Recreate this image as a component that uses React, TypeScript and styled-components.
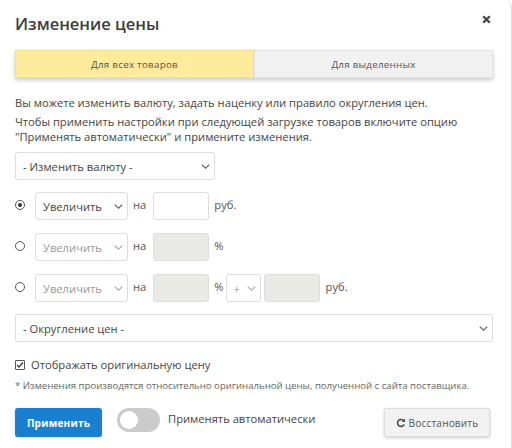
import React from 'react';
import styled, { createGlobalStyle } from 'styled-components';

const GlobalStyle = createGlobalStyle`
  html, body {
    margin: 0;
    padding: 0;
    background: #fff;
  }
  body {
    font-family: "Open Sans", "Liberation Sans", sans-serif;
    color: #444;
  }
`;

const Modal = styled.div`
  box-sizing: border-box;
  width: 512px;
  height: 448px;
  overflow: hidden;
  padding: 0 18px 0 15px;
  background: #fff;
  border-right: 1px solid #ddd;
  border-top-right-radius: 8px;
`;

const Header = styled.div`
  display: flex;
  align-items: center;
  justify-content: space-between;
  height: 50px;
`;

const Title = styled.h2`
  margin: 0 0 4px;
  font-size: 16.5px;
  font-weight: 600;
  color: #3c3c3c;
`;

const Close = styled.span`
  display: flex;
  margin: 0 2px 11px 0;
  color: #444;
`;

const Tabs = styled.div`
  display: flex;
  height: 28px;
  box-shadow: 0 2px 4px rgba(0, 0, 0, 0.22);
  border-radius: 2px;
`;

const Tab = styled.div<{ $active?: boolean }>`
  flex: 1;
  display: flex;
  align-items: center;
  justify-content: center;
  font-size: 9.8px;
  letter-spacing: 0.25px;
  color: #555;
  background: ${({ $active }) => ($active ? '#feeb9c' : '#f1f1f1')};
  border: 1px solid ${({ $active }) => ($active ? '#f3e08e' : '#e2e2e2')};
`;

const Intro = styled.p`
  margin: 17px 0 0;
  font-size: 11.2px;
  line-height: 15px;
  color: #444;
  white-space: nowrap;
`;

const IntroNext = styled(Intro)`
  margin-top: 4px;
`;

const SelectBox = styled.div<{ $width?: number; $disabled?: boolean }>`
  box-sizing: border-box;
  display: flex;
  align-items: center;
  justify-content: space-between;
  flex: none;
  width: ${({ $width }) => ($width ? `${$width}px` : '100%')};
  height: 28px;
  padding: 0 4px 0 7px;
  background: #fff;
  border: 1px solid #ddd;
  border-radius: 3px;
  font-size: 11.2px;
  color: ${({ $disabled }) => ($disabled ? '#999' : '#444')};
`;

const CurrencySelect = styled(SelectBox)`
  margin-top: 8px;
`;

const RoundingSelect = styled(SelectBox)`
  margin-top: 12px;
`;

const PriceRows = styled.div`
  display: flex;
  flex-direction: column;
  gap: 13px;
  margin-top: 12px;
`;

const Row = styled.div`
  display: flex;
  align-items: center;
  height: 28px;
  font-size: 11.2px;
  color: #555;
`;

const Radio = styled.span<{ $checked?: boolean }>`
  box-sizing: border-box;
  flex: none;
  display: flex;
  align-items: center;
  justify-content: center;
  width: 10px;
  height: 10px;
  margin: -2px 10px 0 0;
  border: 1px solid #555;
  border-radius: 50%;
  &::after {
    content: '';
    display: ${({ $checked }) => ($checked ? 'block' : 'none')};
    width: 4px;
    height: 4px;
    border-radius: 50%;
    background: #333;
  }
`;

const TextBox = styled.div<{ $disabled?: boolean }>`
  box-sizing: border-box;
  flex: none;
  width: 56px;
  height: 28px;
  border: 1px solid #ddd;
  border-radius: 3px;
  background: ${({ $disabled }) => ($disabled ? '#e9e9e5' : '#fff')};
`;

const TrailingBox = styled(TextBox)`
  margin-left: 3px;
`;

const Label = styled.span<{ $left: number; $right?: number }>`
  margin: -4px ${({ $right }) => $right ?? 0}px 0 ${({ $left }) => $left}px;
`;

const CheckRow = styled.label`
  display: flex;
  align-items: center;
  gap: 6px;
  margin-top: 15px;
  font-size: 11.2px;
  line-height: 16px;
  color: #444;
`;

const CheckBox = styled.span`
  box-sizing: border-box;
  display: flex;
  align-items: center;
  justify-content: center;
  width: 10px;
  height: 10px;
  border: 1px solid #555;
  border-radius: 1px;
`;

const Note = styled.div`
  margin-top: 6px;
  font-size: 9.6px;
  line-height: 14px;
  color: #666;
  white-space: nowrap;
`;

const Footer = styled.div`
  display: flex;
  align-items: flex-start;
  margin-top: 15px;
`;

const ApplyButton = styled.button`
  width: 87px;
  height: 29px;
  padding: 0;
  border: none;
  border-radius: 3px;
  background: #1a7fd0;
  color: #fff;
  font-family: inherit;
  font-size: 10.1px;
  font-weight: 700;
  letter-spacing: 0.2px;
  box-shadow: 0 1px 3px rgba(0, 0, 0, 0.15);
`;

const Toggle = styled.span`
  box-sizing: border-box;
  display: flex;
  align-items: center;
  width: 43px;
  height: 24px;
  margin-left: 15px;
  padding-left: 3px;
  border-radius: 12px;
  background: #cbcbcb;
  &::after {
    content: '';
    width: 18px;
    height: 18px;
    border-radius: 50%;
    background: #fff;
  }
`;

const ToggleLabel = styled.span`
  margin-left: 8px;
  font-size: 11.2px;
  line-height: 22px;
  color: #444;
`;

const RestoreButton = styled.button`
  display: flex;
  align-items: center;
  justify-content: center;
  gap: 3px;
  flex: none;
  width: 106px;
  height: 29px;
  margin: 0 3px 0 auto;
  padding: 0;
  border: 1px solid #dcdcdc;
  border-radius: 2px;
  background: #f2f2f2;
  color: #555;
  font-family: inherit;
  font-size: 10px;
  letter-spacing: 0.2px;
  box-shadow: 0 1px 3px rgba(0, 0, 0, 0.2);
`;

const Chevron: React.FC<{ light?: boolean }> = ({ light }) => (
  <svg width="9" height="5" viewBox="0 0 9 5" fill="none">
    <path d="M.8.8l3.7 3.4L8.2.8" stroke={light ? '#b0b0b0' : '#666'} strokeWidth="1.2" />
  </svg>
);

const CloseIcon = () => (
  <svg width="9" height="9" viewBox="0 0 9 9" fill="none">
    <path d="M1.2 1.2l6.6 6.6M7.8 1.2L1.2 7.8" stroke="#444" strokeWidth="2.2" />
  </svg>
);

const CheckIcon = () => (
  <svg width="8" height="8" viewBox="0 0 8 8" fill="none">
    <path d="M1 4l2 2.2L7 1.5" stroke="#333" strokeWidth="1.2" />
  </svg>
);

const RestoreIcon = () => (
  <svg width="10" height="10" viewBox="0 0 10 10" fill="none">
    <path d="M8.2 6.4A3.5 3.5 0 1 1 7.7 2.6" stroke="#444" strokeWidth="1.5" />
    <path d="M9 .8v3.2H5.8z" fill="#444" />
  </svg>
);

export default function App() {
  return (
    <>
      <GlobalStyle />
      <Modal>
        <Header>
          <Title>Изменение цены</Title>
          <Close>
            <CloseIcon />
          </Close>
        </Header>

        <Tabs>
          <Tab $active>Для всех товаров</Tab>
          <Tab>Для выделенных</Tab>
        </Tabs>

        <Intro>Вы можете изменить валюту, задать наценку или правило округления цен.</Intro>
        <IntroNext>
          Чтобы применить настройки при следующей загрузке товаров включите опцию
          <br />
          "Применять автоматически" и примените изменения.
        </IntroNext>

        <CurrencySelect $width={200}>
          - Изменить валюту -
          <Chevron />
        </CurrencySelect>

        <PriceRows>
          <Row>
            <Radio $checked />
            <SelectBox $width={93}>
              Увеличить
              <Chevron />
            </SelectBox>
            <Label $left={5} $right={7}>на</Label>
            <TextBox />
            <Label $left={5}>руб.</Label>
          </Row>
          <Row>
            <Radio />
            <SelectBox $width={93} $disabled>
              Увеличить
              <Chevron light />
            </SelectBox>
            <Label $left={5} $right={7}>на</Label>
            <TextBox $disabled />
            <Label $left={5}>%</Label>
          </Row>
          <Row>
            <Radio />
            <SelectBox $width={93} $disabled>
              Увеличить
              <Chevron light />
            </SelectBox>
            <Label $left={5} $right={7}>на</Label>
            <TextBox $disabled />
            <Label $left={5} $right={2}>%</Label>
            <SelectBox $width={35} $disabled>
              +
              <Chevron light />
            </SelectBox>
            <TrailingBox $disabled />
            <Label $left={6}>руб.</Label>
          </Row>
        </PriceRows>

        <RoundingSelect>
          - Округление цен -
          <Chevron />
        </RoundingSelect>

        <CheckRow>
          <CheckBox>
            <CheckIcon />
          </CheckBox>
          Отображать оригинальную цену
        </CheckRow>

        <Note>* Изменения производятся относительно оригинальной цены, полученной с сайта поставщика.</Note>

        <Footer>
          <ApplyButton>Применить</ApplyButton>
          <Toggle />
          <ToggleLabel>Применять автоматически</ToggleLabel>
          <RestoreButton>
            <RestoreIcon />
            Восстановить
          </RestoreButton>
        </Footer>
      </Modal>
    </>
  );
}
